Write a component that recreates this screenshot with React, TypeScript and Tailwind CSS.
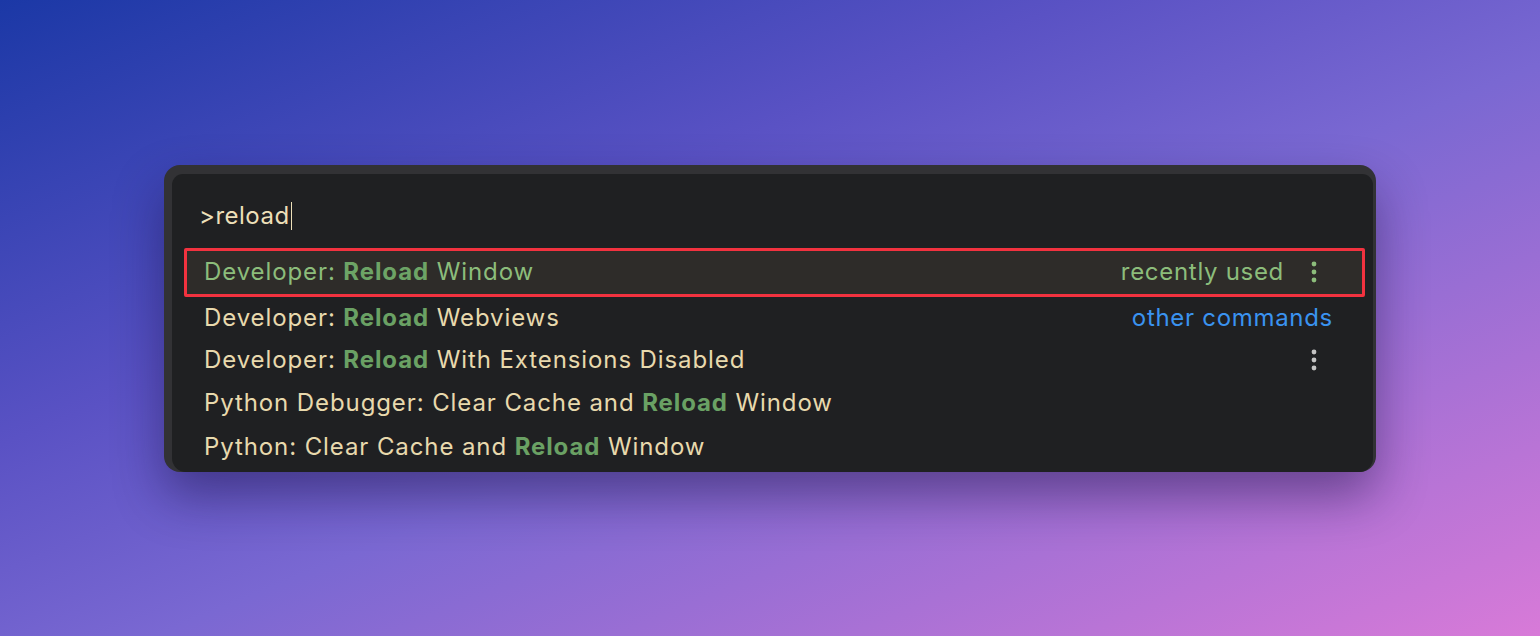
import React from "react";

const Dots = ({ color }: { color: string }) => (
  <svg width="8" height="24" viewBox="0 0 8 24" className="shrink-0">
    <circle cx="4" cy="4" r="2.4" fill={color} />
    <circle cx="4" cy="12" r="2.4" fill={color} />
    <circle cx="4" cy="20" r="2.4" fill={color} />
  </svg>
);

type Row = {
  pre: string;
  post: string;
  h: string;
  active?: boolean;
};

const rows: Row[] = [
  { pre: "Developer: ", post: " Window", h: "h-[49px]", active: true },
  { pre: "Developer: ", post: " Webviews", h: "h-[42px]" },
  { pre: "Developer: ", post: " With Extensions Disabled", h: "h-[42px]" },
  { pre: "Python Debugger: Clear Cache and ", post: " Window", h: "h-[44px]" },
  { pre: "Python: Clear Cache and ", post: " Window", h: "h-[44px]" },
];

export default function App() {
  return (
    <div
      className="w-[1540px] h-[636px] flex items-center justify-center bg-[linear-gradient(to_bottom_right,#1b38a6_0%,#5a52c4_35%,#7a68d2_55%,#d87ad8_100%)]"
      style={{ fontFamily: "Inter, 'Noto Sans', sans-serif" }}
    >
      <div className="w-[1212px] h-[307px] rounded-[16px] bg-[#323235] pl-[8px] pt-[9px] pr-[3px] shadow-[0_24px_50px_rgba(20,10,60,0.45)] flex">
        <div className="flex-1 bg-[#1f2022] rounded-t-[11px] rounded-b-[14px] flex flex-col">
          <div className="pl-[27px] pt-[27px] h-[74px] flex items-start">
            <span className="text-[24px] leading-[30px] text-[#ecdfb8] tracking-[0.5px]">&gt;reload</span>
            <span className="w-[1.5px] h-[28px] mt-[1px] ml-[1px] bg-[#ecdfb8]" />
          </div>
          <div className="pl-[12px] pr-[8px] flex flex-col">
            {rows.map((r, i) => (
              <div
                key={i}
                className={`${r.h} flex items-center pl-[17px] border-[3px] ${
                  i === 1 ? "pr-[29px]" : "pr-[44px]"
                } ${r.active ? "border-[#f2323f] bg-[#2e2c29] rounded-[2px]" : "border-transparent"}`}
              >
                <span
                  className={`flex-1 text-[24px] leading-[30px] tracking-[0.9px] whitespace-nowrap ${
                    r.active ? "text-[#8cbd7b]" : "text-[#e8d9ad]"
                  }`}
                >
                  {r.pre}
                  <span className={`font-bold ${r.active ? "text-[#6da466]" : "text-[#6aa164]"}`}>Reload</span>
                  {r.post}
                </span>
                {i === 0 && (
                  <div className="flex items-center">
                    <span className="text-[24px] leading-[30px] tracking-[0.7px] text-[#8cbd7b] mr-[26px]">recently used</span>
                    <Dots color="#8cbd7b" />
                  </div>
                )}
                {i === 1 && (
                  <span className="text-[24px] leading-[30px] tracking-[0.7px] text-[#3a93f0]">other commands</span>
                )}
                {i === 2 && <Dots color="#c4c4c4" />}
              </div>
            ))}
          </div>
        </div>
      </div>
    </div>
  );
}
